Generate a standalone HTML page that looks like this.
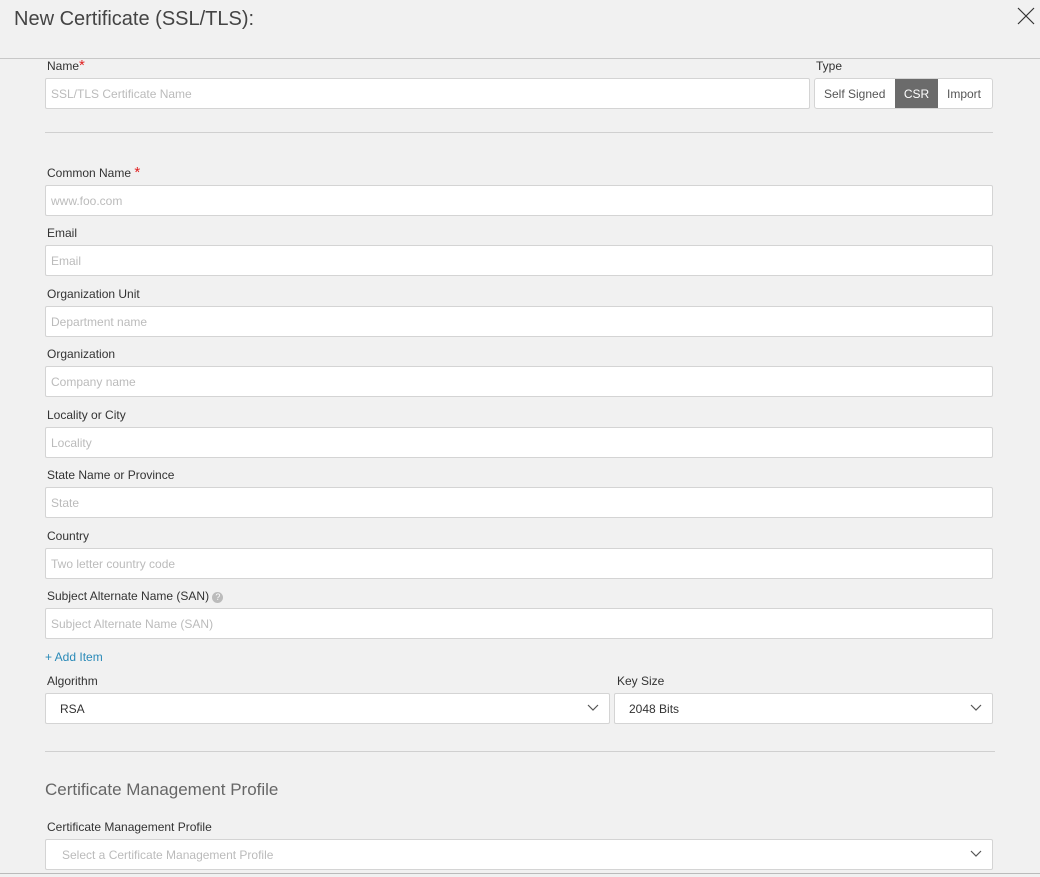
<!DOCTYPE html>
<html><head><style>
body{margin:0;width:1040px;height:877px;background:#f1f1f1;font-family:"Liberation Sans",sans-serif;position:relative;overflow:hidden;color:#333}
.a{position:absolute}
.lbl{position:absolute;left:47px;font-size:12px;color:#333}
.in{position:absolute;left:45px;background:#fff;border:1px solid #d4d4d4;border-radius:2px;font-size:12px;color:#bbb;line-height:31px;padding-left:5px;box-sizing:border-box;width:948px;height:31px}
.chev{position:absolute;right:10px;top:10px}
.star{color:#e02020;font-size:15px;line-height:10px}
</style></head><body>
<div class="a" style="left:14px;top:8px;font-size:20px;color:#444">New Certificate (SSL/TLS):</div>
<svg class="a" style="left:1017px;top:7px" width="18" height="18"><path d="M1 1L17 17M17 1L1 17" stroke="#333" stroke-width="1.2"/></svg>
<div class="a" style="left:0;top:58px;width:1040px;height:1px;background:#c8c8c8"></div>
<div class="lbl" style="top:59px">Name<span class="star">*</span></div>
<div class="in" style="top:78px;width:765px">SSL/TLS Certificate Name</div>
<div class="lbl" style="left:816px;top:59px">Type</div>
<div class="a" style="left:814px;top:78px;width:179px;height:31px;border:1px solid #d4d4d4;border-radius:3px;background:#fff;box-sizing:border-box;font-size:12px;line-height:30px;color:#555">
<span class="a" style="left:9px">Self Signed</span>
<span class="a" style="left:80px;top:0;width:43px;height:29px;background:#6b6b6b;color:#fff;text-align:center">CSR</span>
<span class="a" style="left:132px">Import</span></div>
<div class="a" style="left:45px;top:132px;width:948px;height:1px;background:#d0d0d0"></div>
<div class="lbl" style="top:166px">Common Name <span class="star">*</span></div>
<div class="in" style="top:185px">www.foo.com</div>
<div class="lbl" style="top:226px">Email</div>
<div class="in" style="top:245px">Email</div>
<div class="lbl" style="top:287px">Organization Unit</div>
<div class="in" style="top:306px">Department name</div>
<div class="lbl" style="top:347px">Organization</div>
<div class="in" style="top:366px">Company name</div>
<div class="lbl" style="top:408px">Locality or City</div>
<div class="in" style="top:427px">Locality</div>
<div class="lbl" style="top:468px">State Name or Province</div>
<div class="in" style="top:487px">State</div>
<div class="lbl" style="top:529px">Country</div>
<div class="in" style="top:548px">Two letter country code</div>
<div class="lbl" style="top:589px">Subject Alternate Name (SAN) <span style="display:inline-block;width:11px;height:11px;border-radius:50%;background:#bbb;color:#fff;font-size:9px;line-height:11px;text-align:center;vertical-align:0px">?</span></div>
<div class="in" style="top:608px">Subject Alternate Name (SAN)</div>
<div class="lbl" style="left:45px;top:650px;color:#2a8ab8">+ Add Item</div>
<div class="lbl" style="top:674px">Algorithm</div>
<div class="in" style="top:693px;width:565px;color:#333;padding-left:14px">RSA<svg class="chev" width="12" height="8"><path d="M1 1L6 6L11 1" stroke="#555" fill="none" stroke-width="1.2"/></svg></div>
<div class="lbl" style="left:617px;top:674px">Key Size</div>
<div class="in" style="left:614px;top:693px;width:379px;color:#333;padding-left:14px">2048 Bits<svg class="chev" width="12" height="8"><path d="M1 1L6 6L11 1" stroke="#555" fill="none" stroke-width="1.2"/></svg></div>
<div class="a" style="left:45px;top:751px;width:950px;height:1px;background:#d0d0d0"></div>
<div class="a" style="left:45px;top:780px;font-size:17px;color:#666">Certificate Management Profile</div>
<div class="lbl" style="top:820px">Certificate Management Profile</div>
<div class="in" style="top:839px;padding-left:16px">Select a Certificate Management Profile<svg class="chev" width="12" height="8"><path d="M1 1L6 6L11 1" stroke="#555" fill="none" stroke-width="1.2"/></svg></div>
<div class="a" style="left:0;top:873px;width:1040px;height:1px;background:#bbb"></div>
</body></html>
